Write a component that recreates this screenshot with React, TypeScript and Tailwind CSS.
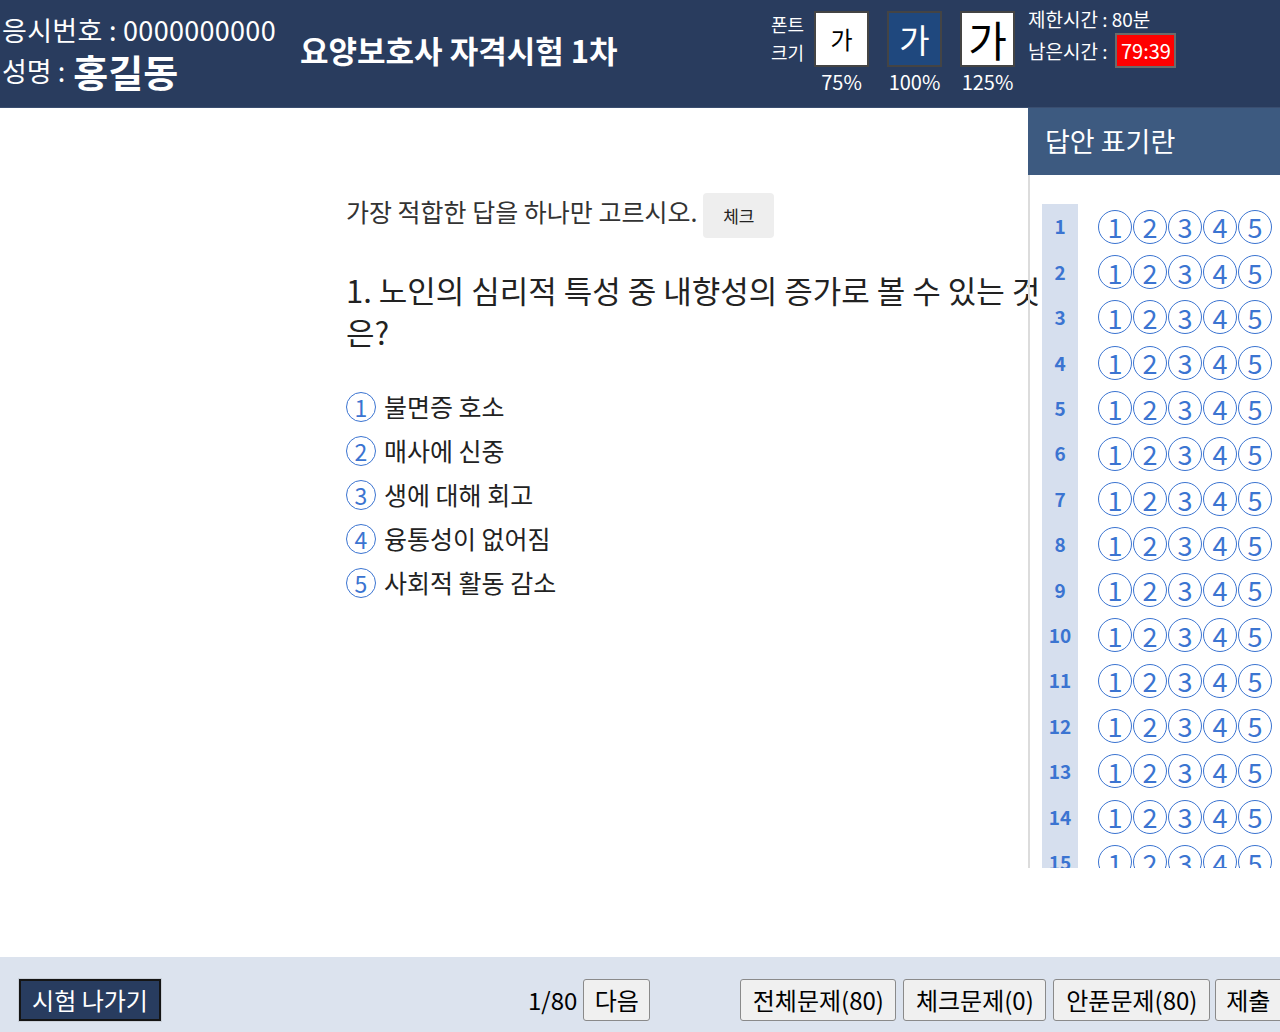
import React from 'react';

const OPTIONS = ['불면증 호소', '매사에 신중', '생에 대해 회고', '융통성이 없어짐', '사회적 활동 감소'];
const ROWS = Array.from({ length: 15 }, (_, i) => i + 1);

function Circle({ n, size }: { n: number; size: 'sm' | 'md' }) {
  return (
    <span
      className={`flex shrink-0 items-center justify-center rounded-full border-[1.5px] border-[#3b74d1] leading-none text-[#3b74d1] ${
        size === 'md' ? 'h-[34px] w-[34px] text-[27px]' : 'h-[30px] w-[30px] text-[23px]'
      }`}
    >
      {n}
    </span>
  );
}

function FontBox({ label, size, active }: { label: string; size: string; active?: boolean }) {
  return (
    <div className="flex flex-col items-center">
      <button
        className={`flex h-[56px] w-[55px] items-center justify-center border-2 border-[#444] leading-none ${size} ${
          active ? 'bg-[#1f487e] text-white' : 'bg-white text-black'
        }`}
      >
        가
      </button>
      <span className="mt-[3px] text-[20px] leading-[24px] text-white">{label}</span>
    </div>
  );
}

function GrayButton({ children, className = '' }: { children: React.ReactNode; className?: string }) {
  return (
    <button
      className={`h-[42px] shrink-0 rounded-[3px] border border-[#8a8a8a] bg-[#f0f0f0] text-[24px] leading-none text-black ${className}`}
    >
      {children}
    </button>
  );
}

export default function App() {
  return (
    <div className="flex h-[1032px] w-[1280px] flex-col overflow-hidden bg-white font-['Noto_Sans_CJK_KR',sans-serif]">
      {/* Header */}
      <header className="flex h-[108px] shrink-0 items-start border-b border-[#3a4e70] bg-[#293c5e] text-white">
        <div className="flex w-[298px] flex-col pl-[2px] pt-[12px]">
          <div className="text-[27px] leading-[36px] tracking-[0.3px]">응시번호 : 0000000000</div>
          <div className="mt-[2px] flex h-[42px] items-center">
            <span className="text-[27px] leading-[36px]">성명 :</span>
            <span className="ml-[8px] text-[38px] font-bold leading-[42px]">홍길동</span>
          </div>
        </div>
        <h1 className="ml-[2px] mt-[31px] text-[31px] font-bold leading-[38px]">요양보호사 자격시험 1차</h1>

        <div className="ml-auto flex items-start pt-[11px]">
          <div className="mt-[-1px] flex flex-col text-[18px] leading-[28px]">
            <span>폰트</span>
            <span>크기</span>
          </div>
          <div className="ml-[10px] flex gap-[18px]">
            <FontBox label="75%" size="text-[24px]" />
            <FontBox label="100%" size="text-[33px]" active />
            <FontBox label="125%" size="text-[42px]" />
          </div>
        </div>

        <div className="ml-[13px] flex w-[252px] flex-col pt-[6px]">
          <div className="text-[19px] leading-[26px]">제한시간 : 80분</div>
          <div className="mt-[1px] flex items-center">
            <span className="text-[19px] leading-[26px]">남은시간 :</span>
            <span className="ml-[8px] flex h-[35px] w-[61px] items-center justify-center border-2 border-[#6b6b6b] bg-[#ff0000] text-[20px] leading-none">
              79:39
            </span>
          </div>
        </div>
      </header>

      {/* Body */}
      <div className="flex min-h-0 flex-1">
        <main className="min-w-0 flex-1 pl-[346px] pt-[85px]">
          <div className="flex items-start">
            <p className="whitespace-nowrap text-[25px] leading-[36px] text-[#333]">가장 적합한 답을 하나만 고르시오.</p>
            <button className="ml-[6px] h-[45px] w-[71px] rounded-[4px] bg-[#eeeeee] text-[17px] text-[#222]">체크</button>
          </div>
          <p className="mt-[31px] whitespace-nowrap text-[31px] leading-[42px] text-[#222]">
            1. 노인의 심리적 특성 중 내향성의 증가로 볼 수 있는 것
            <br />
            은?
          </p>
          <ul className="mt-[32px]">
            {OPTIONS.map((o, i) => (
              <li key={o} className="flex h-[44px] items-center">
                <Circle n={i + 1} size="sm" />
                <span className="ml-[8px] text-[25px] text-[#222]">{o}</span>
              </li>
            ))}
          </ul>
        </main>

        <aside className="relative z-10 flex h-[760px] w-[252px] shrink-0 flex-col">
          <div className="flex h-[67px] shrink-0 items-center bg-[#3d5a80] pl-[17px] text-[27px] text-white">답안 표기란</div>
          <div className="min-h-0 flex-1 overflow-hidden border-l-2 border-[#dcdcdc] pl-[12px] pt-[29px]">
            {ROWS.map((r) => (
              <div key={r} className="flex h-[45.4px] items-center">
                <span className="flex h-full w-[36px] items-center justify-center bg-[#d6dfee] text-[19px] font-bold text-[#3b74d1]">
                  {r}
                </span>
                <div className="ml-[20px] flex gap-[1px]">
                  {[1, 2, 3, 4, 5].map((n) => (
                    <Circle key={n} n={n} size="md" />
                  ))}
                </div>
              </div>
            ))}
          </div>
        </aside>
      </div>

      {/* Footer */}
      <footer className="flex h-[75px] shrink-0 items-start overflow-hidden bg-[#dce3ee] pt-[22px]">
        <button className="ml-[19px] h-[42px] w-[142px] shrink-0 border-2 border-[#151515] bg-[#283c5f] text-[24px] leading-none text-white shadow-[0_0_0_1px_#c9cfd8]">
          시험 나가기
        </button>
        <span className="ml-[367px] flex h-[42px] shrink-0 items-center text-[24px] text-black">1/80</span>
        <GrayButton className="ml-[6px] w-[67px]">다음</GrayButton>
        <GrayButton className="ml-[90px] w-[156px]">전체문제(80)</GrayButton>
        <GrayButton className="ml-[7px] w-[143px]">체크문제(0)</GrayButton>
        <GrayButton className="ml-[7px] w-[157px]">안푼문제(80)</GrayButton>
        <GrayButton className="ml-[5px] w-[80px] pr-[14px]">제출</GrayButton>
      </footer>
    </div>
  );
}
